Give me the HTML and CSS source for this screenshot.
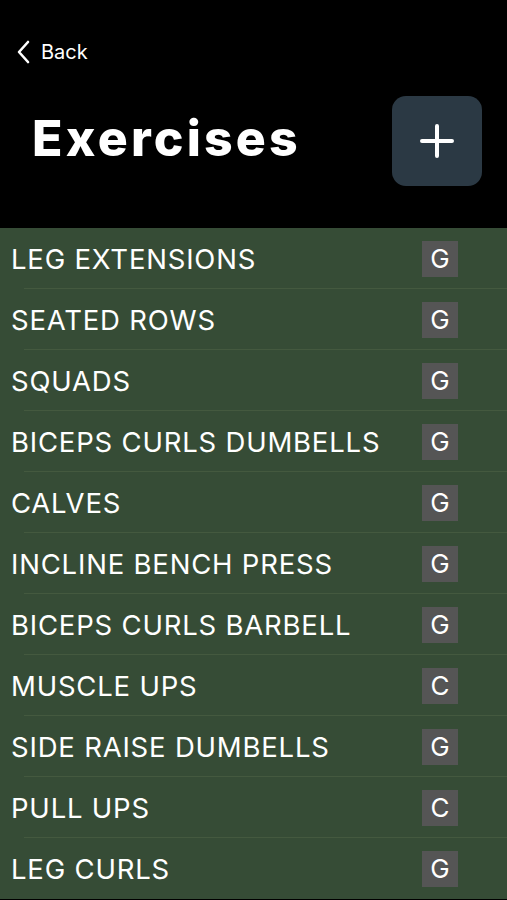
FILE: index.html
```html
<!DOCTYPE html>
<html lang="en">
<head>
    <meta charset="UTF-8">
    <meta name="viewport" content="width=device-width, initial-scale=1.0">
    <title>Exercises</title>
    <link rel="stylesheet" href="styles.css">
</head>
<body>
    <div id="header">
        <a href="" class="back">
            <svg width="14" height="24" viewBox="0 0 14 24"><path d="M11 2 L2 12 L11 22" fill="none" stroke="#fff" stroke-width="2.6" stroke-linecap="round" stroke-linejoin="round"/></svg>
            <span>Back</span>
        </a>
        <div class="title-row">
            <h1>Exercises</h1>
            <button class="add-btn">
                <svg width="34" height="34" viewBox="0 0 34 34"><path d="M17 2 V32 M2 17 H32" stroke="#fff" stroke-width="4" stroke-linecap="round"/></svg>
            </button>
        </div>
    </div>
    <div id="list">
        <div class="row"><span class="name">LEG EXTENSIONS</span><span class="badge">G</span></div>
        <div class="row"><span class="name">SEATED ROWS</span><span class="badge">G</span></div>
        <div class="row"><span class="name">SQUADS</span><span class="badge">G</span></div>
        <div class="row"><span class="name">BICEPS CURLS DUMBELLS</span><span class="badge">G</span></div>
        <div class="row"><span class="name">CALVES</span><span class="badge">G</span></div>
        <div class="row"><span class="name">INCLINE BENCH PRESS</span><span class="badge">G</span></div>
        <div class="row"><span class="name">BICEPS CURLS BARBELL</span><span class="badge">G</span></div>
        <div class="row"><span class="name">MUSCLE UPS</span><span class="badge">C</span></div>
        <div class="row"><span class="name">SIDE RAISE DUMBELLS</span><span class="badge">G</span></div>
        <div class="row"><span class="name">PULL UPS</span><span class="badge">C</span></div>
        <div class="row"><span class="name">LEG CURLS</span><span class="badge">G</span></div>
    </div>
</body>
</html>
```

FILE: styles.css
```css
:root{
    --list-green: #364c36;
    --line-green: #44593f;
    --badge-grey: #555555;
    --button-blue: #2b3944;
}
html,body {
    margin: 0;
    padding: 0;
    font-family: Inter, "Liberation Sans", sans-serif;
    color: #fff;
}
body{
    background-color: #000;
    overflow: hidden;
}

/* ============
    Header
    ============ */
#header{
    height: 228px;
    box-sizing: border-box;
    padding: 40px 25px 0 17px;
}
.back{
    display: flex;
    align-items: center;
    gap: 10px;
    color: #fff;
    text-decoration: none;
    font-size: 20px;
    height: 24px;
}
.title-row{
    display: flex;
    justify-content: space-between;
    align-items: center;
    margin-top: 32px;
}
.title-row h1{
    margin: 0 0 7px 15px;
    font-size: 50px;
    font-weight: 800;
    letter-spacing: 3.2px;
}
.add-btn{
    width: 90px;
    height: 90px;
    border: none;
    border-radius: 14px;
    background-color: var(--button-blue);
    display: flex;
    align-items: center;
    justify-content: center;
    padding: 0;
}

/* ============
    List
    ============ */
#list{
    background-color: var(--list-green);
}
.row{
    height: 61px;
    display: flex;
    align-items: center;
    justify-content: space-between;
    padding: 0 49px 0 11px;
    position: relative;
}
.row::after{ /* inset separator */
    content: "";
    position: absolute;
    left: 24px;
    right: 0;
    bottom: 0;
    height: 1px;
    background-color: var(--line-green);
}
.row:last-child::after{
    display: none;
}
.name{
    font-size: 27.5px;
    letter-spacing: 0.8px;
    padding-top: 1px;
}
.badge{
    width: 36px;
    height: 36px;
    background-color: var(--badge-grey);
    display: flex;
    align-items: center;
    justify-content: center;
    font-size: 26px;
}
```
